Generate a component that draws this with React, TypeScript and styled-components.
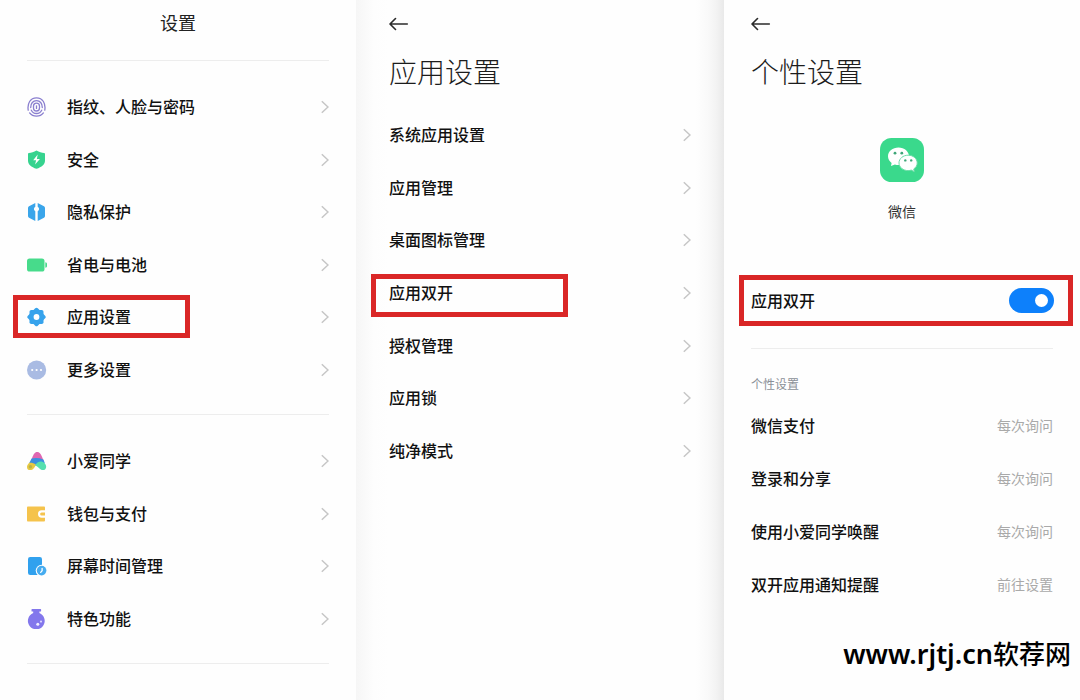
import React, { useId, useState } from "react";
import styled, { createGlobalStyle, css } from "styled-components";

const GlobalStyle = createGlobalStyle`
  *, *::before, *::after { box-sizing: border-box; }
  body {
    margin: 0;
    background: #fefefe;
    color: #111;
    font-family: "Noto Sans CJK SC", sans-serif;
  }
  h1, h2, p, ul { margin: 0; padding: 0; font-weight: inherit; }
  ul { list-style: none; }
  button { font: inherit; color: inherit; }
`;

const Page = styled.div`
  display: grid;
  grid-template-columns: 356fr 368fr 356fr;
  min-height: 100vh;
  position: relative;
  overflow-x: hidden;
`;

const Panel = styled.section<{ $shaded?: boolean }>`
  padding: 0 ${(p) => (p.$shaded ? 33 : 27)}px;
  ${(p) =>
    p.$shaded &&
    css`
      background: linear-gradient(
        to right,
        #f6f6f6 0,
        #f9f9f9 8px,
        #fdfdfd 18px,
        #fefefe 32px,
        #fefefe calc(100% - 28px),
        #f9f9f9 calc(100% - 16px),
        #f2f2f2 calc(100% - 7px),
        #e9e9e9 100%
      );
    `}
`;

const TopTitle = styled.h1`
  height: 60px;
  padding-top: 8px;
  font-size: 18px;
  line-height: 28px;
  text-align: center;
  color: #222;
`;

const Divider = styled.hr`
  height: 1px;
  margin: 0;
  border: 0;
  background: #ededed;
`;

const BackButton = styled.button`
  display: block;
  height: 48px;
  padding: 0;
  border: 0;
  background: none;
  cursor: pointer;
  svg { display: block; }
`;

const LargeTitle = styled.h1`
  height: 61px;
  font-size: 28px;
  font-weight: 300;
  line-height: 46px;
  color: #1c1c1c;
`;

const List = styled.ul<{ $height: number }>`
  display: grid;
  grid-auto-rows: 1fr;
  min-height: ${(p) => p.$height}px;
`;

const Group = styled.div`
  padding: 20px 0 18px;
`;

const Item = styled.li`
  display: flex;
  position: relative;
`;

const RowButton = styled.button`
  display: flex;
  flex: 1;
  align-items: center;
  padding: 0;
  border: 0;
  background: none;
  text-align: left;
  cursor: pointer;
`;

const IconSlot = styled.span`
  display: flex;
  width: 40px;
  svg { display: block; }
`;

const RowLabel = styled.span`
  flex: 1;
  padding-bottom: 2px;
  font-size: 16px;
  font-weight: 500;
  line-height: 24px;
`;

const RowValue = styled.span`
  padding-bottom: 2px;
  font-size: 14px;
  line-height: 24px;
  color: #a9a9a9;
`;

/* Red annotation frame laid over the row it points out. */
const Highlight = styled.span<{ $width: number; $left: number; $top: number }>`
  position: absolute;
  left: ${(p) => p.$left}px;
  top: ${(p) => p.$top}px;
  width: ${(p) => p.$width}px;
  height: 43px;
  border: 5px solid #da2727;
  pointer-events: none;
`;

const AppHeader = styled.div`
  display: flex;
  flex-direction: column;
  align-items: center;
  gap: 17px;
  padding: 29px 0 52px;
`;

const AppName = styled.p`
  font-size: 14px;
  line-height: 24px;
  color: #333;
`;

const SwitchRow = styled.div`
  display: flex;
  align-items: center;
  height: 51px;
  margin: 0 -20px 22px -12px;
  padding: 0 14px 0 7px;
  border: 5px solid #d92626;
  background: #fefefe;
`;

const SwitchLabel = styled(RowLabel).attrs({ as: "label" })<{ htmlFor?: string }>``;

const Switch = styled.input`
  appearance: none;
  display: flex;
  align-items: center;
  width: 45px;
  height: 25px;
  margin: 0;
  padding: 0 6px;
  border-radius: 13px;
  background: #d5d5d5;
  cursor: pointer;
  &::before {
    content: "";
    width: 13px;
    height: 13px;
    border-radius: 50%;
    background: #fff;
  }
  &:checked {
    justify-content: flex-end;
    background: #0d80fb;
  }
`;

const SectionLabel = styled.h2`
  padding: 24px 0 6px;
  font-size: 12px;
  line-height: 21px;
  color: #8b9097;
`;

const Watermark = styled.p`
  display: flex;
  align-items: baseline;
  position: absolute;
  right: 9px;
  bottom: 28px;
  font-size: 26px;
  font-weight: 500;
  line-height: 36px;
  color: #000;
`;

const WatermarkHost = styled.span`
  font-family: "Noto Sans", sans-serif;
  font-size: 27px;
  font-weight: 600;
`;

const Chevron = () => (
  <svg width="9" height="14" viewBox="0 0 9 14" fill="none" stroke="#c6c6c6" strokeWidth="1.5" aria-hidden="true">
    <path d="M1.800 1.200 8 7 1.800 12.800" />
  </svg>
);

const BackArrow = () => (
  <svg width="20" height="14" viewBox="0 0 20 14" fill="none" stroke="#2b2b2b" strokeWidth="1.600" strokeLinecap="round" strokeLinejoin="round" aria-hidden="true">
    <path d="M6.500 1.500 1 7 6.500 12.500M1.300 7H18.300" />
  </svg>
);

const Icon = ({ children }: { children: React.ReactNode }) => (
  <svg width="20" height="20" viewBox="0 0 20 20" aria-hidden="true">
    {children}
  </svg>
);

const FingerprintIcon = () => (
  <Icon>
    <g fill="none" stroke="#8a7fcf" strokeWidth="1.300" strokeLinecap="round">
      <path d="M1.200 13.200C.2 6.500 3.200.8 9.500.8s9.300 5.700 8.300 12.400M2.600 15.900C4.200 18 6.600 19.200 9.500 19.200s5.300-1.200 6.900-3.300" />
      <path d="M3.700 10.500C3.700 6.300 6 3.600 9.500 3.600s5.800 2.700 5.800 6.900M4.300 13.200c1 2.100 2.800 3.300 5.200 3.300s4.200-1.200 5.200-3.300" />
      <rect x="6.500" y="6.200" width="6" height="7.800" rx="3" />
      <path d="M9.500 8.800v2.600" />
    </g>
  </Icon>
);

const ShieldIcon = () => (
  <Icon>
    <path d="M9.500.4c2.700 1.400 5.200 2.200 7.600 2.600.6.100.9.500.9 1.100v6.300c0 4.100-3.200 6.500-8.500 8.400C4.200 16.900 1 14.500 1 10.400V4.100c0-.6.300-1 .9-1.100C4.300 2.600 6.800 1.800 9.500.4Z" fill="#36d38f" />
    <path d="M10.700 4.600 6.200 10.200h2.900L8.100 14.600l4.800-5.600H9.900Z" fill="#fff" />
  </Icon>
);

const PrivacyIcon = () => (
  <Icon>
    <path d="M8.300 1v3.700a2.600 2.600 0 0 0 0 4.600V19L2 15.700a2 2 0 0 1-1-1.700V6a2 2 0 0 1 1-1.700Z" fill="#3aa5ea" />
    <path d="M10.700 1v3.700a2.600 2.600 0 0 1 0 4.600V19l6.300-3.300a2 2 0 0 0 1-1.700V6a2 2 0 0 0-1-1.700Z" fill="#3aa5ea" />
  </Icon>
);

const BatteryIcon = () => (
  <Icon>
    <rect x="0" y="3.500" width="17.500" height="13" rx="2.600" fill="#47db8b" />
    <path d="M18.300 7.200c1.100.1 1.700.8 1.700 1.700v2.200c0 .9-.6 1.600-1.700 1.700Z" fill="#47db8b" />
  </Icon>
);

const GearIcon = () => (
  <Icon>
    <g fill="#37a3ec">
      <rect x="2.500" y="3" width="14" height="14" rx="1.800" />
      <rect x="2.500" y="3" width="14" height="14" rx="1.800" transform="rotate(45 9.500 10)" />
    </g>
    <circle cx="9.500" cy="10" r="2.900" fill="#fff" />
  </Icon>
);

const MoreIcon = () => (
  <Icon>
    <circle cx="9.600" cy="10" r="9.600" fill="#a9bbe3" />
    <g fill="#fff">
      <circle cx="5.200" cy="10" r="1.100" />
      <circle cx="9.600" cy="10" r="1.100" />
      <circle cx="14" cy="10" r="1.100" />
    </g>
  </Icon>
);

const AssistantIcon = () => (
  <Icon>
    <path d="M5 7.200C6.600 3.500 7.500 1 10.200 1s3.900 2.500 5.200 5.800l1.300 3.200H4Z" fill="#e067b1" />
    <path d="M4.600 7.600c3.600-1 7.800-.6 11.800.9l1.500 3.800-7 1.700-3 .6-4.800-1.600-1.100-.6Z" fill="#3a8fe0" />
    <path d="M2.200 11.800c2-.3 4.600.2 6.800 1.900-1.500 2.900-3 5.400-5.700 5.400A3.300 3.300 0 0 1 0 15.900c0-1.400 1.100-2.800 2.200-4.100Z" fill="#e6c843" />
    <circle cx="3.400" cy="15.800" r="1.700" fill="#b9b34b" />
    <path d="M8.200 14.200c1.300-2.600 3.800-4.100 6.300-3.700 2.700.4 4.700 2.900 4.700 5.200 0 2-1.400 3.400-3.300 3.400-3 0-4.200-3.300-7.700-4.900Z" fill="#56dfae" />
  </Icon>
);

const WalletIcon = () => (
  <Icon>
    <path d="M1.200 2.500h15.600c.8 0 1.200.4 1.200 1.200v2.600h-3.300a3.700 3.700 0 0 0 0 7.400H18v2.600c0 .8-.4 1.200-1.200 1.200H1.200C.4 17.500 0 17.100 0 16.300V3.700c0-.8.400-1.200 1.200-1.200Z" fill="#f5c34c" />
    <path d="M14.700 8.400H18v3.200h-3.300a1.600 1.600 0 0 1 0-3.200Z" fill="#f5c34c" />
  </Icon>
);

const ScreenTimeIcon = () => (
  <Icon>
    <rect x="1" y="1" width="14" height="18" rx="2.200" fill="#31a1ee" />
    <circle cx="14.600" cy="14.600" r="5.900" fill="#fefefe" />
    <circle cx="14.600" cy="14.600" r="4.800" fill="#46acf0" />
    <path d="M15.100 12.300v2.500l-1.400 1.600" fill="none" stroke="#fff" strokeWidth="1.300" strokeLinecap="round" />
  </Icon>
);

const FlaskIcon = () => (
  <Icon>
    <path d="M5.100 0h8.400a.6.600 0 0 1 .6.600v1.400a.6.600 0 0 1-.6.600h-1.100v1.500a8.400 8.400 0 1 1-6.200 0V2.600H5.100a.6.600 0 0 1-.6-.6V.6a.6.600 0 0 1 .6-.6Z" fill="#8377ec" />
    <circle cx="10.800" cy="15.200" r="1.500" fill="#f1efff" />
    <circle cx="14" cy="12.600" r="1.100" fill="#d9d4ff" />
  </Icon>
);

const WeChatLogo = () => (
  <svg width="44" height="44" viewBox="0 0 44 44" role="img" aria-label="微信">
    <rect width="44" height="44" rx="11.500" fill="#3ad98c" />
    <path d="M18.500 9.500C12.700 9.500 8 13.400 8 18.300c0 2.700 1.400 5 3.600 6.600l-.6 3.200 3.900-1.700c1.100.3 2.400.6 3.600.6 5.800 0 10.500-3.900 10.500-8.700s-4.700-8.800-10.500-8.800Z" fill="#fff" />
    <path d="M28.100 17.200c-5 0-9.100 3.400-9.100 7.700s4.100 7.700 9.100 7.700c1.200 0 2.200-.2 3.200-.5l2.900 1.600-.4-2.800c2.100-1.400 3.400-3.500 3.400-6 0-4.300-4.100-7.700-9.100-7.700Z" fill="#fff" stroke="#6ddda8" strokeWidth="1" />
    <g fill="#3fa678">
      <circle cx="15" cy="15.200" r="1.400" />
      <circle cx="21.800" cy="15.200" r="1.400" />
      <circle cx="25.300" cy="22.400" r="1.200" />
      <circle cx="31.200" cy="22.400" r="1.200" />
    </g>
  </svg>
);

type Entry = { label: string; icon?: React.ReactNode; value?: string; mark?: [number, number, number] };

const deviceItems: Entry[] = [
  { label: "指纹、人脸与密码", icon: <FingerprintIcon /> },
  { label: "安全", icon: <ShieldIcon /> },
  { label: "隐私保护", icon: <PrivacyIcon /> },
  { label: "省电与电池", icon: <BatteryIcon /> },
  { label: "应用设置", icon: <GearIcon />, mark: [177, -14, 4] },
  { label: "更多设置", icon: <MoreIcon /> },
];

const featureItems: Entry[] = [
  { label: "小爱同学", icon: <AssistantIcon /> },
  { label: "钱包与支付", icon: <WalletIcon /> },
  { label: "屏幕时间管理", icon: <ScreenTimeIcon /> },
  { label: "特色功能", icon: <FlaskIcon /> },
];

const appItems: Entry[] = [
  { label: "系统应用设置" },
  { label: "应用管理" },
  { label: "桌面图标管理" },
  { label: "应用双开", mark: [197, -18, 7] },
  { label: "授权管理" },
  { label: "应用锁" },
  { label: "纯净模式" },
];

const permissionItems: Entry[] = [
  { label: "微信支付", value: "每次询问" },
  { label: "登录和分享", value: "每次询问" },
  { label: "使用小爱同学唤醒", value: "每次询问" },
  { label: "双开应用通知提醒", value: "前往设置" },
];

const SettingsList = ({ items, height }: { items: Entry[]; height: number }) => (
  <List $height={height}>
    {items.map(({ label, icon, value, mark }) => (
      <Item key={label}>
        <RowButton type="button">
          {icon && <IconSlot>{icon}</IconSlot>}
          <RowLabel>{label}</RowLabel>
          {value ? <RowValue>{value}</RowValue> : <Chevron />}
        </RowButton>
        {mark && <Highlight $width={mark[0]} $left={mark[1]} $top={mark[2]} />}
      </Item>
    ))}
  </List>
);

export default function App() {
  const [dual, setDual] = useState(true);
  const switchId = useId();

  return (
    <>
      <GlobalStyle />
      <Page>
        <Panel>
          <TopTitle>设置</TopTitle>
          <Divider />
          <Group>
            <SettingsList items={deviceItems} height={315} />
          </Group>
          <Divider />
          <Group>
            <SettingsList items={featureItems} height={210} />
          </Group>
          <Divider />
        </Panel>

        <Panel $shaded>
          <BackButton type="button" aria-label="返回">
            <BackArrow />
          </BackButton>
          <LargeTitle>应用设置</LargeTitle>
          <SettingsList items={appItems} height={368} />
        </Panel>

        <Panel>
          <BackButton type="button" aria-label="返回">
            <BackArrow />
          </BackButton>
          <LargeTitle>个性设置</LargeTitle>
          <AppHeader>
            <WeChatLogo />
            <AppName>微信</AppName>
          </AppHeader>
          <SwitchRow>
            <SwitchLabel htmlFor={switchId}>应用双开</SwitchLabel>
            <Switch id={switchId} type="checkbox" role="switch" checked={dual} onChange={(e) => setDual(e.target.checked)} />
          </SwitchRow>
          <Divider />
          <SectionLabel>个性设置</SectionLabel>
          <SettingsList items={permissionItems} height={211} />
        </Panel>
        <Watermark>
          <WatermarkHost>www.rjtj.cn</WatermarkHost>软荐网
        </Watermark>
      </Page>
    </>
  );
}
